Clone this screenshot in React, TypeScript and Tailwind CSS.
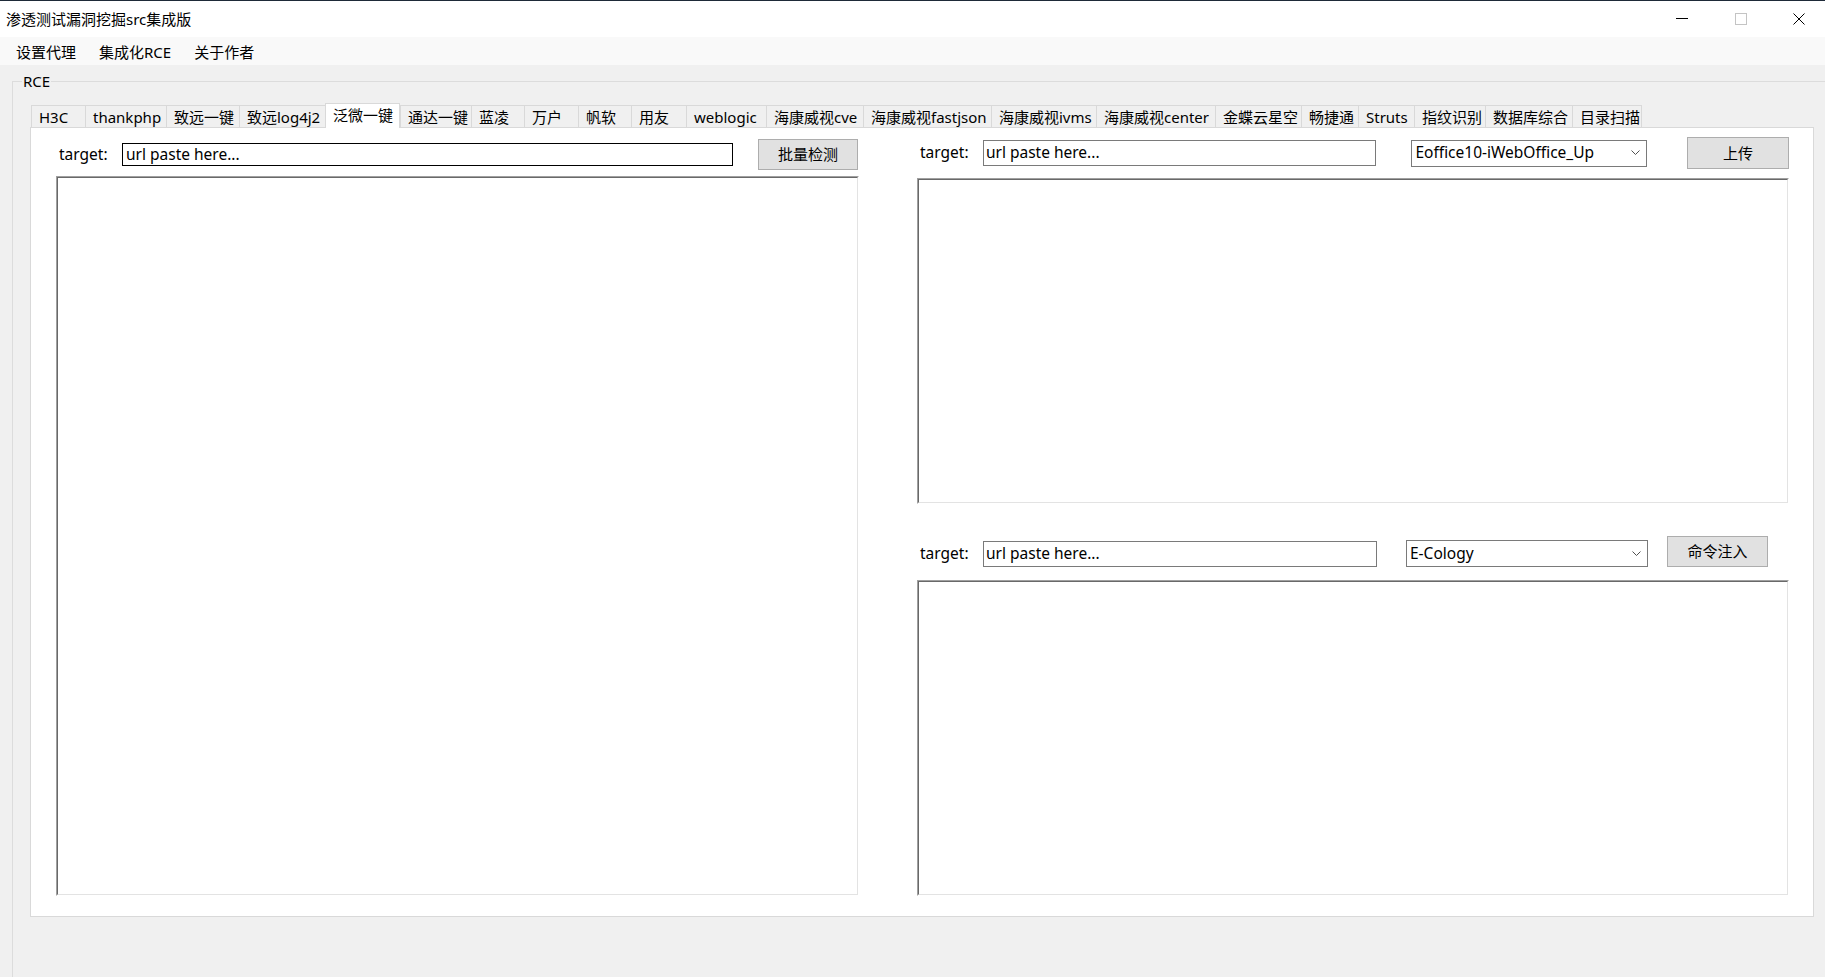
import React from 'react'

const tabs = [
    { label: 'H3C', w: 'w-[54px]' },
    { label: 'thankphp', w: 'w-[81px]' },
    { label: '致远一键', w: 'w-[73px]' },
    { label: '致远log4j2', w: 'w-[86px]' },
    { label: '泛微一键', w: 'w-[75px]', active: true },
    { label: '通达一键', w: 'w-[71px]' },
    { label: '蓝凌', w: 'w-[53px]' },
    { label: '万户', w: 'w-[54px]' },
    { label: '帆软', w: 'w-[53px]' },
    { label: '用友', w: 'w-[55px]' },
    { label: 'weblogic', w: 'w-[80px]' },
    { label: '海康威视cve', w: 'w-[97px]' },
    { label: '海康威视fastjson', w: 'w-[128px]' },
    { label: '海康威视ivms', w: 'w-[105px]' },
    { label: '海康威视center', w: 'w-[119px]' },
    { label: '金蝶云星空', w: 'w-[86px]' },
    { label: '畅捷通', w: 'w-[57px]' },
    { label: 'Struts', w: 'w-[56px]' },
    { label: '指纹识别', w: 'w-[71px]' },
    { label: '数据库综合', w: 'w-[87px]' },
    { label: '目录扫描', w: 'w-[70px]', last: true },
]

const Chevron = () => (
    <svg width="9" height="6" viewBox="0 0 9 6" className="shrink-0">
        <polyline points="0.5,0.5 4.5,4.5 8.5,0.5" fill="none" stroke="#505050" strokeWidth="1" />
    </svg>
)

const Select = ({ value, className }: { value: string; className: string }) => (
    <div className={`flex items-center justify-between border border-[#7a7a7a] bg-white pl-[3px] pr-[6px] ${className}`}>
        <span className="whitespace-nowrap text-[15.5px] leading-none text-black">{value}</span>
        <Chevron />
    </div>
)

const Button = ({ text, className }: { text: string; className: string }) => (
    <button className={`flex items-center justify-center border border-[#adadad] bg-[#e1e1e1] text-[15px] leading-none text-black ${className}`}>
        {text}
    </button>
)

// sunken 3D box used for the output areas
const OutputBox = ({ className }: { className: string }) => (
    <div className={`border-t border-l border-[#a0a0a0] border-r border-b border-r-white border-b-white ${className}`}>
        <textarea
            readOnly
            className="block h-full w-full resize-none border-t border-l border-[#696969] border-r border-b border-r-[#e3e3e3] border-b-[#e3e3e3] bg-white outline-none"
        />
    </div>
)

const Label = () => (
    <span className="ml-[3px] w-[63px] text-[15.5px] leading-none text-black">target:</span>
)

export default function App() {
    return (
        <div className="flex h-[977px] w-[1825px] flex-col overflow-hidden bg-[#f0f0f0] font-['Noto_Sans','Noto_Sans_CJK_SC',sans-serif] text-black">
            {/* title bar */}
            <div className="flex h-[37px] items-center justify-between border-t border-[#1e2a38] bg-white">
                <span className="pl-[6px] text-[15px] leading-none">渗透测试漏洞挖掘src集成版</span>
                <div className="flex items-center gap-[46px] pr-[20px]">
                    <svg width="12" height="12" viewBox="0 0 12 12">
                        <line x1="0" y1="5.5" x2="12" y2="5.5" stroke="#000" strokeWidth="1" />
                    </svg>
                    <svg width="12" height="12" viewBox="0 0 12 12" className="ml-[1px]">
                        <rect x="0.5" y="0.5" width="11" height="11" fill="none" stroke="#c4c4c4" strokeWidth="1" />
                    </svg>
                    <svg width="12" height="12" viewBox="0 0 12 12">
                        <line x1="0.5" y1="0.5" x2="11.5" y2="11.5" stroke="#000" strokeWidth="1" />
                        <line x1="11.5" y1="0.5" x2="0.5" y2="11.5" stroke="#000" strokeWidth="1" />
                    </svg>
                </div>
            </div>

            {/* menu bar */}
            <div className="flex h-[28px] items-center gap-[23px] bg-[#f9f9f9] pl-[16px] pt-[3px] text-[15px] leading-none">
                <span>设置代理</span>
                <span>集成化RCE</span>
                <span>关于作者</span>
            </div>

            {/* RCE group */}
            <div className="relative mt-[16px] ml-[12px] flex-1 border-t border-l border-[#dcdcdc] pt-[21px]">
                <span className="absolute left-[9px] top-[-9px] bg-[#f0f0f0] px-[1px] text-[15px] leading-[17px]">RCE</span>

                <div className="ml-[17px] w-[1784px]">
                    <div className="flex h-[24px] items-end pl-[1px]">
                        {tabs.map((t, i) =>
                            t.active ? (
                                <div
                                    key={i}
                                    className={`relative z-10 -mb-[1px] h-[25px] ${t.w} border-x border-t border-[#d9d9d9] bg-white pl-[7px] text-[15px] leading-[22px] whitespace-nowrap`}
                                >
                                    {t.label}
                                </div>
                            ) : (
                                <div
                                    key={i}
                                    className={`h-[22px] ${t.w} border-l border-t ${t.last ? 'border-r' : ''} border-[#d9d9d9] bg-[#f0f0f0] pl-[7px] text-[15px] leading-[22px] whitespace-nowrap overflow-hidden`}
                                >
                                    {t.label}
                                </div>
                            ),
                        )}
                    </div>

                    <div className="flex h-[790px] border border-[#d9d9d9] bg-white pl-[25px]">
                        {/* left column */}
                        <div className="flex w-[803px] flex-col pt-[11px]">
                            <div className="flex h-[31px] items-center">
                                <Label />
                                <div className="flex h-[23px] w-[611px] items-center border border-black pl-[3px] text-[15.5px] leading-none">
                                    url paste here...
                                </div>
                                <Button text="批量检测" className="ml-[25px] h-[31px] w-[100px]" />
                            </div>
                            <OutputBox className="mt-[6px] h-[720px]" />
                        </div>

                        {/* right column */}
                        <div className="ml-[58px] flex w-[872px] flex-col pt-[9px]">
                            <div className="flex h-[32px] items-center">
                                <Label />
                                <div className="flex h-[26px] w-[394px] items-center border border-[#7a7a7a] pl-[2px] text-[15.5px] leading-none">
                                    url paste here...
                                </div>
                                <Select value="Eoffice10-iWebOffice_Up" className="ml-[35px] h-[27px] w-[236px]" />
                                <Button text="上传" className="ml-[40px] h-[32px] w-[102px]" />
                            </div>
                            <OutputBox className="mt-[9px] h-[326px]" />

                            <div className="mt-[32px] flex h-[31px] items-end">
                                <div className="flex h-[26px] items-center">
                                    <Label />
                                </div>
                                <div className="flex h-[26px] w-[394px] items-center border border-[#7a7a7a] pl-[2px] text-[15.5px] leading-none">
                                    url paste here...
                                </div>
                                <Select value="E-Cology" className="ml-[29px] h-[27px] w-[242px]" />
                                <Button text="命令注入" className="ml-[19px] h-[31px] w-[101px]" />
                            </div>
                            <OutputBox className="mt-[13px] h-[316px]" />
                        </div>
                    </div>
                </div>
            </div>
        </div>
    )
}
